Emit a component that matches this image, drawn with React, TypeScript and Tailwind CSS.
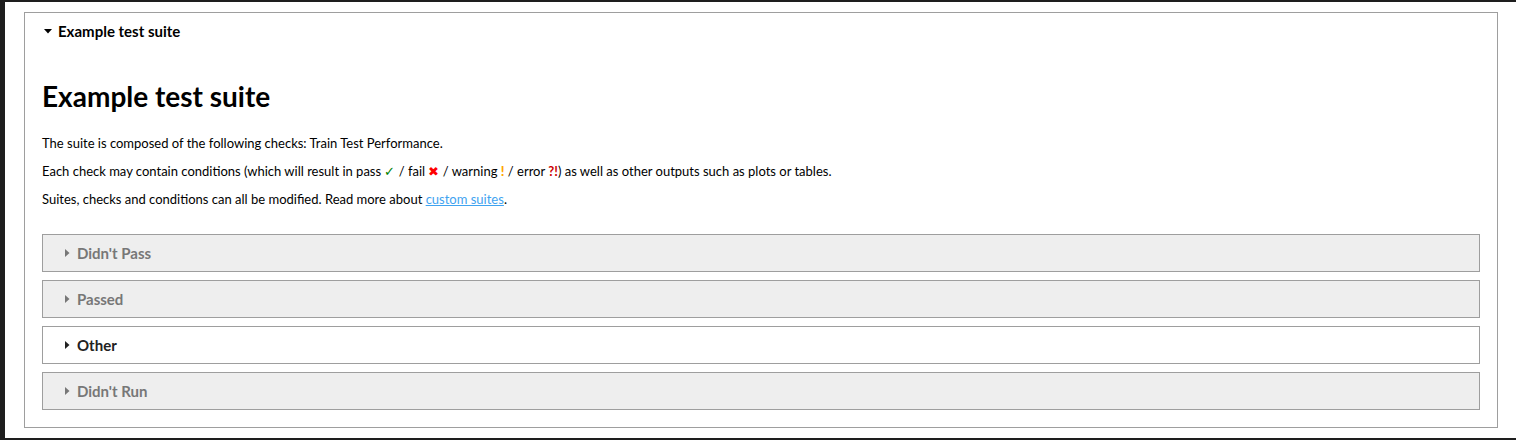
import { useState } from 'react';

const sections = [
  { id: 'didnt-pass', title: "Didn't Pass", muted: true },
  { id: 'passed', title: 'Passed', muted: true },
  { id: 'other', title: 'Other', muted: false },
  { id: 'didnt-run', title: "Didn't Run", muted: true },
];

function Caret({ open, className }: { open: boolean; className?: string }) {
  return (
    <svg width="8" height="8" viewBox="0 0 8 8" className={className}>
      {open ? <path d="M0 2h8L4 6.5z" fill="currentColor" /> : <path d="M2 0v8l4.5-4z" fill="currentColor" />}
    </svg>
  );
}

export default function App() {
  const [open, setOpen] = useState(true);

  return (
    <div className="min-h-screen bg-[#1e1e1e] pl-[5px] pt-[2px] pb-[2px]" style={{ fontFamily: 'Lato, "Open Sans", sans-serif' }}>
      <div className="bg-white h-[436px] pt-[10px] pl-[19px] pr-[18px]">
        <div className="border border-[#9e9e9e] px-[17px] pb-[17px]">
          <button
            onClick={() => setOpen(!open)}
            className="flex items-center gap-[6px] h-[36px] text-[15px] font-bold text-black"
          >
            <Caret open={open} className="ml-[2px]" />
            Example test suite
          </button>
          {open && (
            <div>
              <h1 className="mt-[31px] text-[28px] font-bold text-black leading-[32px]">Example test suite</h1>
              <div className="mt-[17px] text-[13px] text-black leading-[28px]">
                <p>The suite is composed of the following checks: Train Test Performance.</p>
                <p>
                  Each check may contain conditions (which will result in pass <span className="text-[#008000]">✓</span> / fail{' '}
                  <span className="text-[#ff0000]">✖</span> / warning <span className="text-[#ffa500] font-black">!</span> / error{' '}
                  <span className="text-[#cc0000] font-bold">?!</span>) as well as other outputs such as plots or tables.
                </p>
                <p>
                  Suites, checks and conditions can all be modified. Read more about{' '}
                  <a href="#" className="text-[#3fa3f0] underline">custom suites</a>.
                </p>
              </div>
              <div className="mt-[21px] flex flex-col gap-[8px]">
                {sections.map((s) => (
                  <div
                    key={s.id}
                    className={`h-[38px] border border-[#9e9e9e] flex items-center gap-[6px] pl-[20px] text-[15px] font-bold ${
                      s.muted ? 'bg-[#eeeeee] text-[#777777]' : 'bg-white text-[#222222]'
                    }`}
                  >
                    <Caret open={false} />
                    {s.title}
                  </div>
                ))}
              </div>
            </div>
          )}
        </div>
      </div>
    </div>
  );
}
